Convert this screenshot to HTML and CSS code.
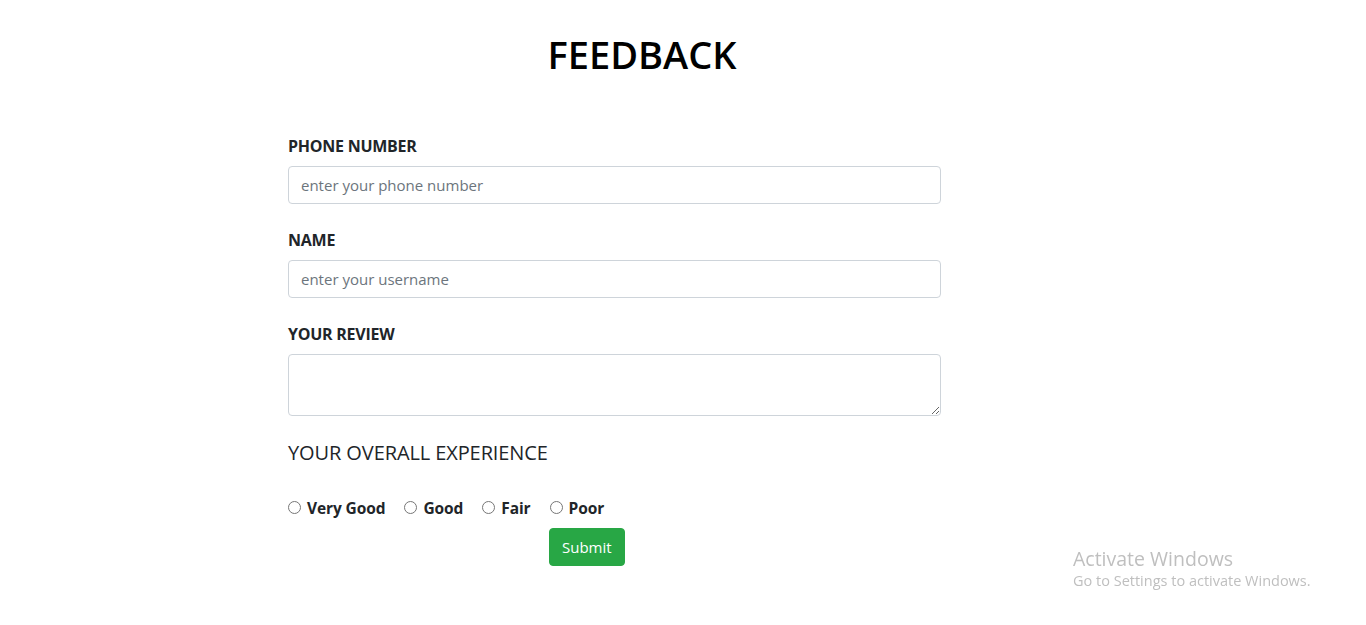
FILE: index.html
```html
<!DOCTYPE html>
<html lang="en">
<head>
<meta charset="utf-8">
<title>Feedback</title>
<link rel="stylesheet" href="styles.css">
</head>
<body>
<div class="wrap">
  <h1 class="title">FEEDBACK</h1>
  <form class="form">
    <div class="group">
      <label class="label" for="phone">PHONE NUMBER</label>
      <input class="control" id="phone" type="text" placeholder="enter your phone number">
    </div>
    <div class="group">
      <label class="label" for="name">NAME</label>
      <input class="control" id="name" type="text" placeholder="enter your username">
    </div>
    <div class="group">
      <label class="label" for="review">YOUR REVIEW</label>
      <textarea class="control area" id="review" rows="2"></textarea>
    </div>
    <h5 class="subhead">YOUR OVERALL EXPERIENCE</h5>
    <div class="radios">
      <label class="opt"><input type="radio" name="exp"><span>Very Good</span></label>
      <label class="opt"><input type="radio" name="exp"><span>Good</span></label>
      <label class="opt"><input type="radio" name="exp"><span>Fair</span></label>
      <label class="opt"><input type="radio" name="exp"><span>Poor</span></label>
    </div>
    <button class="submit" type="button">Submit</button>
  </form>
</div>
<div class="watermark">
  <div class="wm-title">Activate Windows</div>
  <div class="wm-sub">Go to Settings to activate Windows.</div>
</div>
</body>
</html>
```

FILE: styles.css
```css
html, body {
  margin: 0;
  padding: 0;
  background: #fff;
}
body {
  font-family: "Open Sans", "Noto Sans", sans-serif;
  font-size: 16px;
  line-height: 1.5;
  color: #212529;
}
.wrap {
  margin-left: 288px;
  width: 708px;
  padding-top: 30px;
}
.title {
  margin: 0 0 56px 0;
  font-size: 38px;
  font-weight: 600;
  line-height: 48px;
  text-align: center;
  color: #000;
}
.form {
  width: 653px;
  display: flex;
  flex-direction: column;
}
.group {
  display: flex;
  flex-direction: column;
  margin-bottom: 24px;
}
.group:nth-child(3) {
  margin-bottom: 25px;
}
.label {
  font-size: 16px;
  font-weight: 700;
  line-height: 24px;
  margin-bottom: 8px;
  letter-spacing: -0.25px;
}
.control {
  box-sizing: border-box;
  height: 38px;
  padding: 6px 12px;
  font-family: inherit;
  font-size: 15px;
  line-height: 24px;
  color: #495057;
  border: 1px solid #ced4da;
  border-radius: 4px;
  background: #fff;
  margin: 0;
}
.control::placeholder {
  color: #6c757d;
  opacity: 1;
}
.area {
  height: 62px;
  resize: vertical;
}
.subhead {
  margin: 0 0 31px 0;
  font-size: 20px;
  font-weight: 500;
  line-height: 24px;
  letter-spacing: -0.1px;
}
.radios {
  display: flex;
  align-items: center;
  height: 24px;
}
.opt {
  display: flex;
  align-items: center;
  font-weight: 700;
  font-size: 15.5px;
  line-height: 24px;
  margin-right: 19px;
  letter-spacing: -0.1px;
}
.opt input {
  margin: 0 6px 1px 0;
  width: 13px;
  height: 13px;
}
.submit {
  align-self: flex-start;
  margin: 8px 0 0 261px;
  height: 38px;
  padding: 0 12px;
  font-family: inherit;
  font-size: 15px;
  color: #fff;
  background: #28a745;
  border: 1px solid #28a745;
  border-radius: 4px;
}
.watermark {
  position: fixed;
  left: 1073px;
  top: 546px;
  color: #bfbfbf;
}
.wm-title {
  font-size: 19.5px;
  font-weight: 400;
  line-height: 26px;
}
.wm-sub {
  font-size: 14.5px;
  line-height: 18px;
}
```
